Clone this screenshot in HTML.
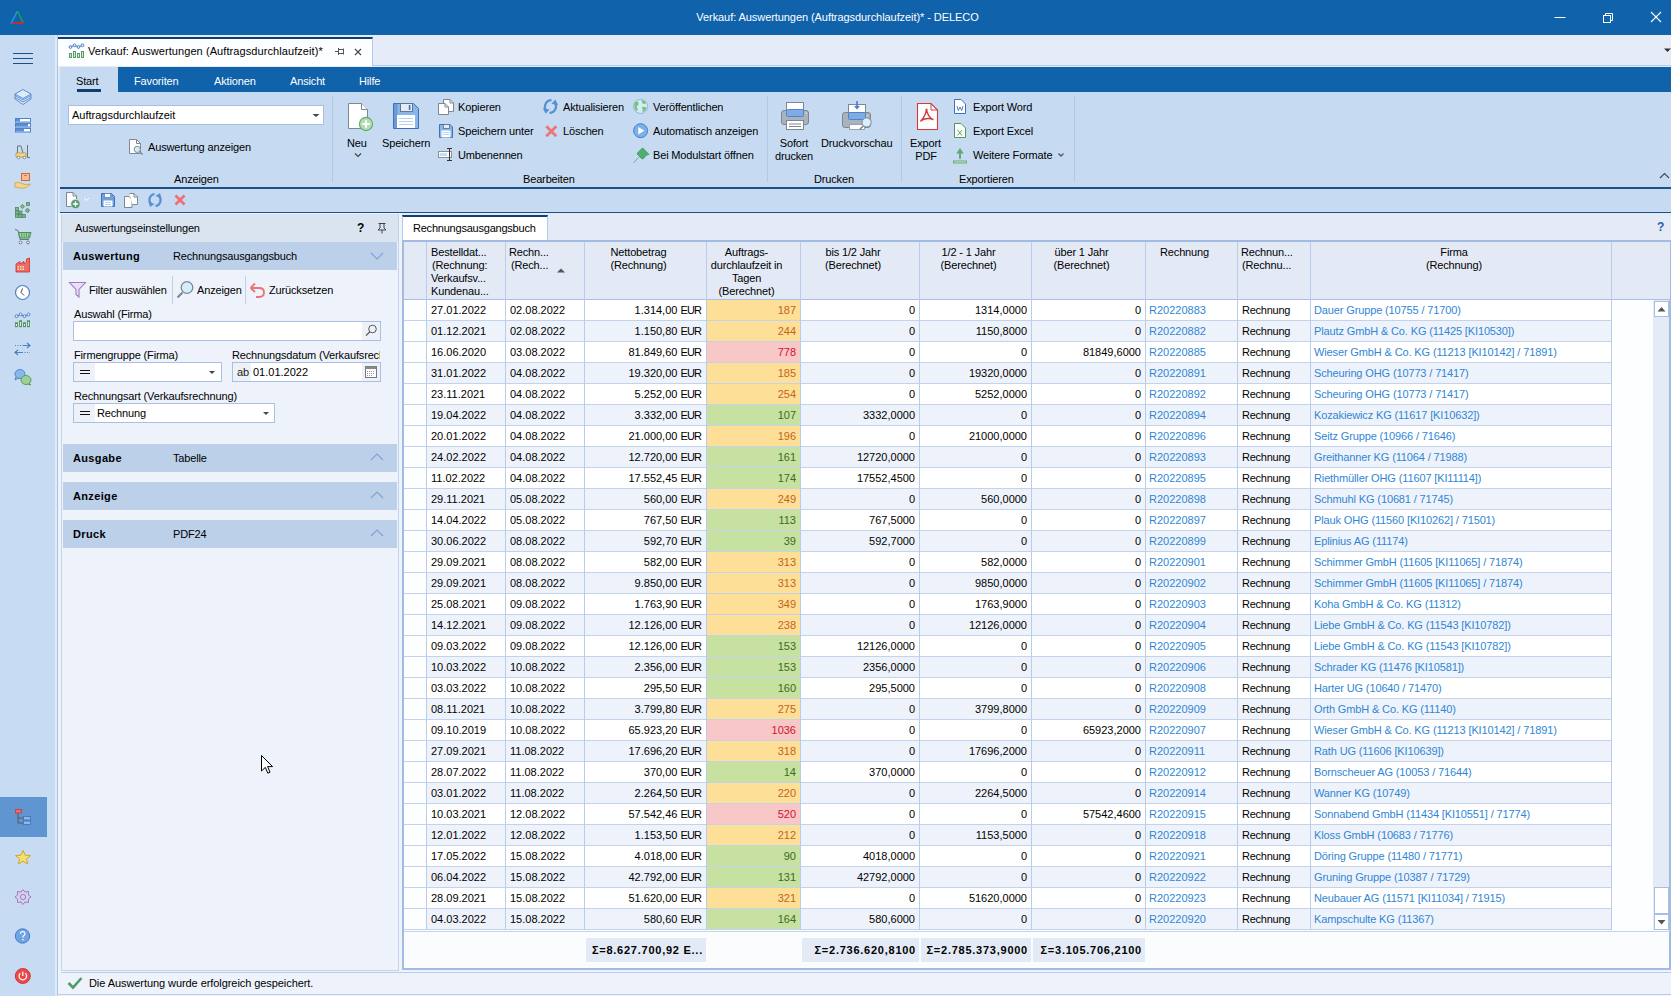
<!DOCTYPE html>
<html><head><meta charset="utf-8">
<style>
*{margin:0;padding:0;box-sizing:border-box}
html,body{width:1671px;height:996px;overflow:hidden;background:#eef3fb;font-family:"Liberation Sans",sans-serif;font-size:11px;color:#000}
.a{position:absolute}
.t{white-space:nowrap;line-height:14px;letter-spacing:-0.15px}
.n{letter-spacing:0}
.r{text-align:right}
.c{text-align:center}
.lk{color:#2f86d6}
.b{font-weight:bold}
svg{position:absolute;overflow:visible}
</style></head><body>

<!-- TITLE BAR -->
<div class="a" style="left:0;top:0;width:1671px;height:35px;background:#1062ab"></div>
<div class="a t" style="left:2px;top:10px;width:1671px;text-align:center;color:#fff;font-size:11px;letter-spacing:-0.07px">Verkauf: Auswertungen (Auftragsdurchlaufzeit)* - DELECO</div>

<!-- title icons -->
<svg style="left:0;top:0" width="40" height="35">
<line x1="11" y1="23.5" x2="17.5" y2="11" stroke="#1a9be0" stroke-width="1.6"/>
<line x1="17.5" y1="11" x2="23" y2="22.5" stroke="#22a045" stroke-width="1.6"/>
<line x1="12.5" y1="23.2" x2="24" y2="23.2" stroke="#e0202a" stroke-width="1.8"/>
</svg>
<svg style="left:1540px;top:0" width="131" height="35">
<line x1="14.5" y1="17.5" x2="25.5" y2="17.5" stroke="#fff" stroke-width="1"/>
<rect x="63.5" y="15.5" width="7" height="7" fill="none" stroke="#fff" stroke-width="1"/>
<path d="M65.5 15.5 V13.5 H72.5 V20.5 H70.5" fill="none" stroke="#fff" stroke-width="1"/>
<line x1="111" y1="12" x2="121" y2="22" stroke="#fff" stroke-width="1.1"/>
<line x1="121" y1="12" x2="111" y2="22" stroke="#fff" stroke-width="1.1"/>
</svg>

<!-- SIDEBAR -->
<div class="a" style="left:0;top:35px;width:55px;height:961px;background:#c7dbf2"></div>
<div class="a" style="left:55px;top:35px;width:5px;height:961px;background:#e0eaf7"></div>
<div class="a" style="left:57px;top:35px;width:1px;height:961px;background:#a9c3e8"></div>
<svg style="left:0;top:35px" width="55" height="961">
<!-- hamburger -->
<g stroke="#1b4f86" stroke-width="1"><line x1="13" y1="18.5" x2="33" y2="18.5"/><line x1="13" y1="23.5" x2="33" y2="23.5"/><line x1="13" y1="28.5" x2="33" y2="28.5"/></g>
<!-- layers y89-105 -->
<g transform="translate(0,54)" fill="#dcecfb" stroke="#5f8fcf" stroke-width="1">
<path d="M23 0.5 L31 5 L31 10 L23 15.5 L15 10 L15 5 Z"/>
<path d="M15 6.5 L23 11 L31 6.5 M15 8.5 L23 13 L31 8.5" fill="none"/>
<path d="M15 5 L23 9.5 L31 5" fill="none"/>
</g>
<!-- list y118-132 -->
<g transform="translate(0,83)">
<rect x="15.5" y="0.5" width="15" height="3.5" fill="#fff" stroke="#4e84cb"/>
<rect x="15.5" y="5.5" width="15" height="3.5" fill="#fff" stroke="#4e84cb"/>
<rect x="15.5" y="10.5" width="15" height="3.5" fill="#fff" stroke="#4e84cb"/>
<rect x="16" y="1" width="4" height="2.5" fill="#5b8fd4"/>
<rect x="16" y="6" width="12" height="2.5" fill="#5b8fd4"/>
<rect x="16" y="11" width="8" height="2.5" fill="#5b8fd4"/>
</g>
<!-- forklift y146-160 -->
<g transform="translate(0,110)">
<path d="M17.5 8 V1 H21 L23 8" fill="none" stroke="#6a7686" stroke-width="1"/>
<line x1="27.5" y1="0" x2="27.5" y2="12.5" stroke="#6a7686" stroke-width="1"/>
<line x1="27.5" y1="12.5" x2="30" y2="12.5" stroke="#6a7686" stroke-width="1"/>
<path d="M16 8 H26 V12 H16 Z" fill="#f6d77a" stroke="#b89a3a" stroke-width="0.8"/>
<circle cx="18.5" cy="12.5" r="1.3" fill="#fff" stroke="#6a7686" stroke-width="0.8"/>
<circle cx="24.5" cy="12.5" r="1.3" fill="#fff" stroke="#6a7686" stroke-width="0.8"/>
</g>
<!-- hand box y173-189 -->
<g transform="translate(0,138)">
<rect x="21.5" y="0.5" width="8" height="7" fill="#fbb98f" stroke="#c96a3a" stroke-width="1"/>
<line x1="24" y1="2.5" x2="27" y2="2.5" stroke="#c96a3a" stroke-width="0.8"/>
<path d="M15 10 Q18 8.5 22 10.5 L25 11.5 Q27 12 30.5 11 Q29 14 24 15 Q19 15.5 15 14 Z" fill="#f6d48a" stroke="#c8a24a" stroke-width="0.8"/>
</g>
<!-- blocks y202-217 -->
<g transform="translate(0,167)" fill="#7fb58f" stroke="#4f8a62" stroke-width="0.8">
<rect x="15.5" y="5.5" width="3" height="3"/><rect x="15.5" y="9" width="3" height="3"/><rect x="15.5" y="12.5" width="3" height="3"/>
<rect x="19" y="9" width="3" height="3"/><rect x="19" y="12.5" width="3" height="3"/><rect x="22.5" y="12.5" width="3" height="3"/>
<rect x="21" y="3" width="3" height="3" transform="rotate(45 22.5 4.5)"/><rect x="26.5" y="0.5" width="3" height="3"/><rect x="26" y="7" width="3" height="3" transform="rotate(30 27.5 8.5)"/>
</g>
<!-- cart y229-244 -->
<g transform="translate(0,194)">
<path d="M15 0.5 L18 1.5 L20 10.5 H29" fill="none" stroke="#6a7686" stroke-width="1"/>
<path d="M18.5 3.5 H31 L29.5 9 H20 Z" fill="#9fd49a" stroke="#3f8a4f" stroke-width="0.9"/>
<g stroke="#3f8a4f" stroke-width="0.7"><line x1="21.5" y1="4" x2="22" y2="8.5"/><line x1="24" y1="4" x2="24.3" y2="8.5"/><line x1="26.5" y1="4" x2="26.5" y2="8.5"/><line x1="29" y1="4" x2="28.5" y2="8.5"/></g>
<circle cx="20.5" cy="13.5" r="1.4" fill="#fff" stroke="#6a7686"/><circle cx="28" cy="13.5" r="1.4" fill="#fff" stroke="#6a7686"/>
</g>
<!-- factory y258-272 -->
<g transform="translate(0,223)">
<path d="M16 14 V6 L20 3.5 V6 L24 3.5 V6 L26.5 4 V1 L29.5 0 V14 Z" fill="#ee6b64" stroke="#c9302c" stroke-width="0.8"/>
<g fill="#fde7c0"><rect x="17.5" y="8" width="1.5" height="1.5"/><rect x="20" y="8" width="1.5" height="1.5"/><rect x="22.5" y="8" width="1.5" height="1.5"/><rect x="17.5" y="10.5" width="1.5" height="1.5"/><rect x="20" y="10.5" width="1.5" height="1.5"/><rect x="22.5" y="10.5" width="1.5" height="1.5"/></g>
</g>
<!-- clock y285-300 -->
<g transform="translate(0,250)">
<circle cx="22.5" cy="7.5" r="7" fill="#fff" stroke="#4f7fc4" stroke-width="1.2"/>
<path d="M22.5 3.5 L21 7.5 L24 10.5" fill="none" stroke="#333" stroke-width="0.9"/>
</g>
<!-- chart y314-328 -->
<g transform="translate(-54,234.2)">
<path d="M70.5 47 L74.5 45.3 L78.5 47 L82.5 45.3" fill="none" stroke="#4f7fc4" stroke-width="1"/>
<g fill="#e8f0fb" stroke="#4f7fc4" stroke-width="1"><circle cx="70.5" cy="47" r="1.4"/><circle cx="74.5" cy="45.3" r="1.4"/><circle cx="78.5" cy="47" r="1.4"/><circle cx="82.5" cy="45.3" r="1.4"/></g>
<g fill="#d6efd0" stroke="#5a9a68" stroke-width="1"><rect x="69.5" y="53.5" width="2" height="4"/><rect x="73.5" y="51.5" width="2" height="6"/><rect x="77.5" y="53.5" width="2" height="4"/><rect x="81.5" y="51.5" width="2" height="6"/></g>
</g>
<!-- arrows y343-354 -->
<g transform="translate(0,308)" stroke="#4f7fc4" fill="none">
<path d="M15 2.5 H23" stroke-dasharray="1 1.5" stroke-width="1.2"/>
<path d="M23 2.5 H30 M27 0 L30 2.5 L27 5" stroke-width="1.2"/>
<path d="M22 9.5 H30" stroke-dasharray="1 1.5" stroke-width="1.2"/>
<path d="M15 9.5 H22 M18 7 L15 9.5 L18 12" stroke-width="1.2"/>
</g>
<!-- chat y369-385 -->
<g transform="translate(0,334)">
<ellipse cx="20" cy="5" rx="5" ry="4.5" fill="#8ab8ea" stroke="#4f7fc4" stroke-width="0.9"/>
<path d="M16 8 L15 11 L18.5 9" fill="#8ab8ea" stroke="#4f7fc4" stroke-width="0.9"/>
<ellipse cx="26" cy="11" rx="5" ry="4.5" fill="#9fcf96" stroke="#4f9a58" stroke-width="0.9"/>
<path d="M29 14 L31 16 L27.5 15" fill="#9fcf96" stroke="#4f9a58" stroke-width="0.9"/>
</g>
<!-- highlight -->
<rect x="0" y="762" width="47" height="40" fill="#5f95d0"/>
<g transform="translate(0,774)">
<rect x="15.5" y="0.5" width="6" height="3.5" fill="#f0686a" stroke="#c73a3a" stroke-width="0.8"/>
<path d="M18 4 V14 H23 M18 9 H23" fill="none" stroke="#555" stroke-width="0.9"/>
<rect x="23.5" y="7.5" width="7" height="3.5" fill="#8ab8ea" stroke="#3f6fb4" stroke-width="0.8"/>
<rect x="23.5" y="12" width="7" height="3.5" fill="#8ab8ea" stroke="#3f6fb4" stroke-width="0.8"/>
</g>
<!-- star y850-864 -->
<path transform="translate(0,815)" d="M23 0.5 L25.2 5.2 L30.5 5.6 L26.4 9 L27.8 14 L23 11.2 L18.2 14 L19.6 9 L15.5 5.6 L20.8 5.2 Z" fill="#f7e06a" stroke="#c8a22a" stroke-width="0.9"/>
<!-- gear y889-905 -->
<g transform="translate(0,854)">
<path d="M23 0.5 L25 3 L28.5 2.5 L28.5 6 L31 8 L28.5 10 L28.5 13.5 L25 13 L23 15.5 L21 13 L17.5 13.5 L17.5 10 L15 8 L17.5 6 L17.5 2.5 L21 3 Z" fill="#d8cdea" stroke="#9b7fc0" stroke-width="1"/>
<circle cx="23" cy="8" r="2.6" fill="#c7dbf2" stroke="#9b7fc0" stroke-width="1"/>
</g>
<!-- help y929-944 -->
<g transform="translate(0,893)">
<circle cx="22.5" cy="8" r="7.2" fill="#6fa4e4" stroke="#3f72bf" stroke-width="0.9"/>
<path d="M20.3 5.8 Q20.5 3.5 22.7 3.5 Q25 3.6 25 5.8 Q25 7.3 23 8.3 V9.8" fill="none" stroke="#fff" stroke-width="1.1"/>
<circle cx="23" cy="11.8" r="0.8" fill="#fff"/>
</g>
<!-- power y969-985 -->
<g transform="translate(0,933)">
<circle cx="22.8" cy="8" r="7.5" fill="#eb4a4a" stroke="#c22f2f" stroke-width="0.9"/>
<path d="M20.3 5.2 A3.8 3.8 0 1 0 25.3 5.2" fill="none" stroke="#fff" stroke-width="1.2"/>
<line x1="22.8" y1="3.8" x2="22.8" y2="8" stroke="#fff" stroke-width="1.2"/>
</g>
</svg>

<!-- DOC TAB STRIP -->
<div class="a" style="left:58px;top:35px;width:1613px;height:32px;background:#e6ecf7"></div>
<div class="a" style="left:58px;top:65px;width:1613px;height:1px;background:#b4cbec"></div>
<div class="a" style="left:58px;top:37px;width:315px;height:29px;background:#fdfeff;border-top:2px solid #0f3e73;border-right:1px solid #b4cbec"></div>
<svg style="left:0;top:0" width="120" height="70">
<path d="M70.5 47 L74.5 45.3 L78.5 47 L82.5 45.3" fill="none" stroke="#4f7fc4" stroke-width="1"/>
<g fill="#e8f0fb" stroke="#4f7fc4" stroke-width="1"><circle cx="70.5" cy="47" r="1.4"/><circle cx="74.5" cy="45.3" r="1.4"/><circle cx="78.5" cy="47" r="1.4"/><circle cx="82.5" cy="45.3" r="1.4"/></g>
<g fill="#d6efd0" stroke="#5a9a68" stroke-width="1"><rect x="69.5" y="53.5" width="2" height="4"/><rect x="73.5" y="51.5" width="2" height="6"/><rect x="77.5" y="53.5" width="2" height="4"/><rect x="81.5" y="51.5" width="2" height="6"/></g>
</svg>
<div class="a t" style="left:88px;top:44px;color:#000;letter-spacing:0.08px">Verkauf: Auswertungen (Auftragsdurchlaufzeit)*</div>
<svg style="left:330px;top:40px" width="40" height="24">
<g stroke="#555" stroke-width="1" fill="none"><path d="M5 11.5 H8.5 M8.5 8 V15 M8.5 9.5 H13.5 M8.5 13.5 H13.5 M13.5 8.5 V14.5"/></g>
<path d="M25 9 L31 15 M31 9 L25 15" stroke="#444" stroke-width="1.1"/>
</svg>
<svg style="left:1658px;top:44px" width="16" height="12"><path d="M6 4.5 H13 L9.5 8 Z" fill="#333"/></svg>

<!-- RIBBON TAB BAR -->
<div class="a" style="left:118px;top:67px;width:1553px;height:25px;background:#1062ab"></div>
<div class="a" style="left:60px;top:67px;width:58px;height:25px;background:#c6dbf2"></div>
<div class="a t" style="left:76px;top:74px;color:#000">Start</div>
<div class="a" style="left:77px;top:89px;width:24px;height:3px;background:#0f3e73"></div>
<div class="a t" style="left:134px;top:74px;color:#fff">Favoriten</div>
<div class="a t" style="left:214px;top:74px;color:#fff">Aktionen</div>
<div class="a t" style="left:290px;top:74px;color:#fff">Ansicht</div>
<div class="a t" style="left:359px;top:74px;color:#fff">Hilfe</div>

<!-- RIBBON BODY -->
<div class="a" style="left:60px;top:92px;width:1611px;height:95px;background:#c6dbf2"></div>
<div class="a" style="left:60px;top:187px;width:1611px;height:2px;background:#1b4f86"></div>
<!-- group separators -->
<div class="a" style="left:332px;top:96px;width:1px;height:86px;background:#b3c8e2"></div>
<div class="a" style="left:767px;top:96px;width:1px;height:86px;background:#b3c8e2"></div>
<div class="a" style="left:901px;top:96px;width:1px;height:86px;background:#b3c8e2"></div>
<div class="a" style="left:1074px;top:96px;width:1px;height:86px;background:#b3c8e2"></div>
<!-- Anzeigen group -->
<div class="a" style="left:68px;top:105px;width:256px;height:20px;background:#fff;border:1px solid #a7bedf"></div>
<div class="a t n" style="left:72px;top:108px;color:#000">Auftragsdurchlaufzeit</div>
<svg style="left:300px;top:105px" width="24" height="20"><path d="M12.5 9 H19.5 L16 12 Z" fill="#444"/></svg>
<svg style="left:125px;top:136px" width="24" height="20">
<path d="M4.5 3.5 H11.5 L15.5 7.5 V17.5 H4.5 Z" fill="#fff" stroke="#7d8a96" stroke-width="1"/>
<path d="M11.5 3.5 V7.5 H15.5" fill="none" stroke="#7d8a96"/>
<circle cx="12.3" cy="13.4" r="3.1" fill="#d3ecfb" stroke="#7d8a96" stroke-width="1"/>
<line x1="14.6" y1="15.7" x2="17.6" y2="18.6" stroke="#7d8a96" stroke-width="1.4"/>
</svg>
<div class="a t" style="left:148px;top:140px;color:#000">Auswertung anzeigen</div>
<div class="a t" style="left:174px;top:172px;color:#000">Anzeigen</div>

<!-- Bearbeiten group -->
<svg style="left:340px;top:98px" width="100" height="64">
<!-- Neu -->
<path d="M8.5 5.5 H21.5 L27.5 11.5 V30.5 H8.5 Z" fill="#fff" stroke="#7d8792" stroke-width="1"/>
<path d="M21.5 5.5 V11.5 H27.5" fill="#fff" stroke="#7d8792"/>
<circle cx="26" cy="26" r="6.6" fill="#b5dbb0" stroke="#5fae6a" stroke-width="1.1"/>
<path d="M26 22.3 V29.7 M22.3 26 H29.7" stroke="#fff" stroke-width="1.8"/>
<path d="M15 55.5 L18 58.5 L21 55.5" fill="none" stroke="#444" stroke-width="1.2"/>
<!-- Speichern -->
<path d="M53.5 5.5 H73.5 L78.5 10.5 V30.5 H53.5 Z" fill="#8ab4ec" stroke="#4470b0" stroke-width="1"/>
<rect x="54" y="6" width="3.5" height="24" fill="#6b9ad8"/>
<rect x="60.5" y="5.5" width="12" height="8" fill="#e4ecf5" stroke="#55708e" stroke-width="0.9"/>
<rect x="68.8" y="7" width="1.6" height="5" fill="#3f6fb4"/>
<rect x="57" y="17" width="18" height="13" fill="#fff"/>
<g stroke="#a9cdf3" stroke-width="0.9"><line x1="59" y1="20.5" x2="73" y2="20.5"/><line x1="59" y1="23.5" x2="73" y2="23.5"/><line x1="59" y1="26.5" x2="73" y2="26.5"/></g>
</svg>
<div class="a t" style="left:347px;top:136px;color:#000">Neu</div>
<div class="a t" style="left:382px;top:136px;color:#000">Speichern</div>
<svg style="left:430px;top:96px" width="340" height="70">
<!-- Kopieren -->
<path d="M13.5 3.5 H20 L23.5 7 V15.5 H13.5 Z" fill="#fff" stroke="#7d8792"/>
<path d="M20 3.5 V7 H23.5" fill="none" stroke="#7d8792"/>
<path d="M8.5 7.5 H15 L18.5 11 V18.5 H8.5 Z" fill="#fff" stroke="#7d8792"/>
<path d="M15 7.5 V11 H18.5" fill="none" stroke="#7d8792"/>
<!-- Speichern unter -->
<path d="M9.5 28.5 H20 L22.5 31 V41.5 H9.5 Z" fill="#8ab4ec" stroke="#4470b0"/>
<rect x="13.5" y="28.5" width="6" height="4" fill="#e4ecf5" stroke="#55708e" stroke-width="0.8"/>
<rect x="11.5" y="34.5" width="9" height="7" fill="#fff"/>
<path d="M12.5 36.5 H19.5 M12.5 38.5 H19.5" stroke="#a9cdf3" stroke-width="0.8"/>
<!-- Umbenennen -->
<rect x="8.5" y="55.5" width="13" height="6" fill="#fff" stroke="#8a929c"/>
<rect x="10" y="57" width="7" height="3" fill="#bfe0f7"/>
<line x1="19.5" y1="53" x2="19.5" y2="64.5" stroke="#333" stroke-width="1"/>
<path d="M17 52.5 H22 M17 64.5 H22" stroke="#333" stroke-width="1"/>
<!-- Aktualisieren -->
<path d="M121.5 4.2 A6.6 6.6 0 0 0 116 14.5" fill="none" stroke="#5b8fd4" stroke-width="2.2"/>
<path d="M119.5 17 A6.6 6.6 0 0 0 125 6.8" fill="none" stroke="#5b8fd4" stroke-width="2.2"/>
<path d="M112.8 12.2 L115.6 17.8 L119.6 13.6 Z M128.2 9.2 L125.4 3.6 L121.4 7.8 Z" fill="#5b8fd4"/>
<!-- Loeschen -->
<path d="M116.3 30.2 L126.3 40.2 M126.3 30.2 L116.3 40.2" stroke="#ec7676" stroke-width="2.8"/>
<!-- Veroeffentlichen -->
<circle cx="210.6" cy="10.5" r="7" fill="#d2ecf7" stroke="#8fb6d8" stroke-width="1"/>
<path d="M205 6 Q207 5 208.5 6.5 Q209 9 207 10 Q206.5 12.5 208 14 L206 15 Q204 12 204.2 9 Z" fill="#7fc07f"/>
<path d="M211.5 4 Q214.5 4 216.5 6.5 Q215 8.5 213 8 Q211.5 6.5 211.5 4 Z M212 11 Q215 10 216.8 12 Q215.5 15.5 212.5 16.5 Q213 13.5 212 11 Z" fill="#7fc07f"/>
<!-- Automatisch anzeigen -->
<circle cx="210.6" cy="34.7" r="7" fill="#7ab1ea" stroke="#4a7fc8" stroke-width="1"/>
<path d="M208.3 31 L214.3 34.7 L208.3 38.4 Z" fill="#fff"/>
<!-- Bei Modulstart -->
<path d="M212.5 51.8 L219 58.3 L216.5 59.3 L213 63 L211.5 62.5 L207.5 58.5 L207.2 57 L211 53.5 Z" fill="#4fae6e" stroke="#3a8a58" stroke-width="0.6"/>
<line x1="209" y1="61" x2="203.5" y2="66.8" stroke="#7a9a88" stroke-width="0.9"/>
</svg>
<div class="a t" style="left:458px;top:100px;color:#000">Kopieren</div>
<div class="a t" style="left:458px;top:124px;color:#000">Speichern unter</div>
<div class="a t" style="left:458px;top:148px;color:#000">Umbenennen</div>
<div class="a t" style="left:563px;top:100px;color:#000">Aktualisieren</div>
<div class="a t" style="left:563px;top:124px;color:#000">Löschen</div>
<div class="a t" style="left:653px;top:100px;color:#000">Veröffentlichen</div>
<div class="a t" style="left:653px;top:124px;color:#000">Automatisch anzeigen</div>
<div class="a t" style="left:653px;top:148px;color:#000">Bei Modulstart öffnen</div>
<div class="a t" style="left:523px;top:172px;color:#000">Bearbeiten</div>

<!-- Drucken group -->
<svg style="left:770px;top:96px" width="140" height="40">
<!-- Sofort drucken printer -->
<rect x="16.5" y="6.5" width="17" height="9" fill="#fff" stroke="#7d8792"/>
<rect x="11.5" y="14.5" width="27" height="14" rx="2.5" fill="#a9b3be" stroke="#7d8792"/>
<rect x="16.5" y="13.5" width="17" height="7" rx="1" fill="#7fabe6" stroke="#4a7fc8" stroke-width="0.9"/>
<rect x="35.5" y="16.5" width="1.5" height="1.5" fill="#f3e27a"/>
<rect x="16.5" y="24.5" width="17" height="9" fill="#fff" stroke="#7d8792"/>
<line x1="19" y1="28" x2="31" y2="28" stroke="#7d8792"/><line x1="19" y1="30.5" x2="31" y2="30.5" stroke="#7d8792"/>
<!-- Druckvorschau -->
<rect x="78.5" y="8.5" width="17" height="9" fill="#fff" stroke="#7d8792"/>
<path d="M87 5 V11" stroke="#4a7fc8" stroke-width="1.6"/>
<path d="M84 10 L87 13.5 L90 10 Z" fill="#4a7fc8"/>
<rect x="72.5" y="16.5" width="28" height="15" rx="2.5" fill="#a9b3be" stroke="#7d8792"/>
<rect x="78.5" y="16.5" width="17" height="7" rx="1" fill="#7fabe6" stroke="#4a7fc8" stroke-width="0.9"/>
<rect x="96.5" y="19" width="1.5" height="1.5" fill="#f3e27a"/>
<rect x="79.5" y="28.5" width="15" height="5" fill="#fff" stroke="#9aa3ad"/>
<circle cx="96.6" cy="26.4" r="4.6" fill="#d9efff" stroke="#7d8792" stroke-width="1"/>
<line x1="93.3" y1="29.7" x2="90" y2="33.3" stroke="#7d8792" stroke-width="1.6"/>
</svg>
<div class="a t c" style="left:764px;width:60px;top:136px;color:#000">Sofort</div>
<div class="a t c" style="left:764px;width:60px;top:149px;color:#000">drucken</div>
<div class="a t" style="left:821px;top:136px;color:#000">Druckvorschau</div>
<div class="a t" style="left:814px;top:172px;color:#000">Drucken</div>

<!-- Exportieren group -->
<svg style="left:905px;top:96px" width="170" height="70">
<!-- PDF -->
<path d="M12.5 7.5 H26 L32.5 14 V33.5 H12.5 Z" fill="#fff" stroke="#d43a3a" stroke-width="1.1"/>
<path d="M26 7.5 V14 H32.5" fill="none" stroke="#d43a3a"/>
<path d="M21.5 13.5 Q20.5 20 15.5 25.5 M21.5 13.5 Q22.5 20 28 24 M16.5 24.5 Q21.5 21 28.5 23.5" fill="none" stroke="#d43a3a" stroke-width="1.5"/><circle cx="21.5" cy="13.5" r="1" fill="#d43a3a"/>
<!-- Word y99-114 -->
<path d="M49.5 3.5 H56 L60.5 8 V17.5 H49.5 Z" fill="#fff" stroke="#3f6fb4"/>
<path d="M52 10 L53.3 14.5 L55 11 L56.7 14.5 L58 10" fill="none" stroke="#3f6fb4" stroke-width="0.9"/>
<!-- Excel -->
<path d="M49.5 27.5 H56 L60.5 32 V41.5 H49.5 Z" fill="#fff" stroke="#4f9a58"/>
<path d="M52.5 34 L57 39.5 M57 34 L52.5 39.5" stroke="#4f9a58" stroke-width="0.9"/>
<!-- Weitere Formate -->
<path d="M55 55 V63" fill="none" stroke="#5fa870" stroke-width="1.8"/><path d="M51.3 57.5 L55 52 L58.7 57.5 Z" fill="#5fa870"/>
<rect x="48.5" y="65" width="13" height="2" fill="#c6e6c0" stroke="#5fa870" stroke-width="0.9"/>
<path d="M153.5 57.5 L156 60 L158.5 57.5" fill="none" stroke="#555" stroke-width="1.3"/>
</svg>
<div class="a t" style="left:910px;top:136px;color:#000">Export</div>
<div class="a t c" style="left:906px;width:40px;top:149px;color:#000">PDF</div>
<div class="a t" style="left:973px;top:100px;color:#000">Export Word</div>
<div class="a t" style="left:973px;top:124px;color:#000">Export Excel</div>
<div class="a t" style="left:973px;top:148px;color:#000">Weitere Formate</div>
<div class="a t" style="left:959px;top:172px;color:#000">Exportieren</div>
<svg style="left:1650px;top:168px" width="21" height="16"><path d="M10 10 L14.5 5.5 L19 10" fill="none" stroke="#444" stroke-width="1.1"/></svg>

<!-- QUICK TOOLBAR -->
<div class="a" style="left:60px;top:189px;width:1611px;height:23px;background:#c6dbf2"></div>
<div class="a" style="left:60px;top:212px;width:1611px;height:1px;background:#1b4f86"></div>
<svg style="left:57px;top:189px" width="140" height="23">
<path d="M9.5 3.5 H16 L19.5 7 V17.5 H9.5 Z" fill="#fff" stroke="#7d8792"/>
<path d="M16 3.5 V7 H19.5" fill="none" stroke="#7d8792"/>
<circle cx="18.5" cy="15" r="4.6" fill="#4f9a68" stroke="#c6dbf2" stroke-width="0.8"/>
<path d="M18.5 12.3 V17.7 M15.8 15 H21.2" stroke="#fff" stroke-width="1.3"/>
<path d="M27 9 L29.5 11.5 L32 9" fill="none" stroke="#fff" stroke-width="1"/>
<path d="M44.5 4.5 H54.5 L57.5 7.5 V17.5 H44.5 Z" fill="#6ea0e0" stroke="#4470b0"/>
<rect x="47.5" y="4.5" width="6" height="4" fill="#fff" stroke="#4470b0" stroke-width="0.6"/>
<rect x="46.5" y="11.5" width="9" height="6" fill="#fff"/>
<path d="M48 13.5 H54 M48 15.5 H54" stroke="#9ec3ef" stroke-width="0.8"/>
<path d="M67.5 7.5 H72 L75 10.5 V18.5 H67.5 Z" fill="#fff" stroke="#7d8792"/>
<path d="M72.5 4.5 H77 L80.5 8 V15.5 H75.5" fill="#fff" stroke="#7d8792"/>
<path d="M77 4.5 V8 H80.5" fill="none" stroke="#7d8792"/>
<path d="M97.5 5 A6 6 0 0 0 94 15" fill="none" stroke="#5b8fd4" stroke-width="2.2"/>
<path d="M98.5 17 A6 6 0 0 0 102 7" fill="none" stroke="#5b8fd4" stroke-width="2.2"/>
<path d="M91.5 12.5 L93 18 L97.5 15 Z M104.5 9.5 L103 4 L98.5 7 Z" fill="#5b8fd4"/>
<path d="M118.5 6.5 L127.5 15.5 M127.5 6.5 L118.5 15.5" stroke="#ec7070" stroke-width="2.6"/>
</svg>

<!-- SETTINGS PANEL -->
<div class="a" style="left:61px;top:214px;width:338px;height:757px;background:#eef3fb;border:1px solid #c2d3ea"></div>
<div class="a" style="left:62px;top:214px;width:336px;height:28px;background:#dae4f1"></div>
<div class="a t" style="left:75px;top:221px;color:#000">Auswertungseinstellungen</div>
<div class="a t b" style="left:357px;top:221px;color:#000;font-size:12px">?</div>
<svg style="left:372px;top:218px" width="20" height="20"><path d="M6.5 5.5 H13.5 M8 5.5 V10 L6 12 H14 L12 10 V5.5 M10 12 V15.5" fill="none" stroke="#444" stroke-width="1"/></svg>

<div class="a" style="left:63px;top:242px;width:334px;height:28px;background:#bcd0ea"></div>
<div class="a t b" style="left:73px;top:249px;color:#000;letter-spacing:0.35px">Auswertung</div>
<div class="a t" style="left:173px;top:249px;color:#000">Rechnungsausgangsbuch</div>
<svg style="left:365px;top:246px" width="24" height="20"><path d="M6 7 L12 13 L18 7" fill="none" stroke="#7fa2d8" stroke-width="1.2"/></svg>

<svg style="left:62px;top:272px" width="280" height="40">
<path d="M7.5 10.5 H23.5 L17 17.5 V25 L14 22.5 V17.5 Z" fill="#eadff5" stroke="#9b7fc0" stroke-width="1.1"/>
<line x1="110.5" y1="4" x2="110.5" y2="32" stroke="#c3d1e4" stroke-width="1"/>
<circle cx="125" cy="15.5" r="5.8" fill="#d6ecfb" stroke="#7c8896" stroke-width="1.3"/>
<line x1="120.5" y1="20.5" x2="115.5" y2="25.5" stroke="#7c8896" stroke-width="2.2"/>
<line x1="183.5" y1="4" x2="183.5" y2="32" stroke="#c3d1e4" stroke-width="1"/>
<path d="M189.5 16 H197 Q202 16 202 20.5 Q202 25 197 25 H194" fill="none" stroke="#e87474" stroke-width="1.8"/>
<path d="M188.5 16 L193 11.5 M188.5 16 L193 20" fill="none" stroke="#e87474" stroke-width="1.8"/>
</svg>
<div class="a t" style="left:89px;top:283px;color:#000">Filter auswählen</div>
<div class="a t" style="left:197px;top:283px;color:#000">Anzeigen</div>
<div class="a t" style="left:269px;top:283px;color:#000">Zurücksetzen</div>

<div class="a t" style="left:74px;top:307px;color:#000">Auswahl (Firma)</div>
<div class="a" style="left:73px;top:321px;width:308px;height:20px;background:#fff;border:1px solid #a9c0e2"></div>
<div class="a" style="left:362px;top:322px;width:18px;height:18px;background:#eef2f8"></div>
<svg style="left:362px;top:322px" width="18" height="18"><circle cx="10.5" cy="7" r="3.8" fill="none" stroke="#555" stroke-width="1"/><line x1="7.8" y1="9.8" x2="4" y2="13.6" stroke="#555" stroke-width="1.3"/></svg>

<div class="a t" style="left:74px;top:348px;color:#000">Firmengruppe (Firma)</div>
<div class="a" style="left:73px;top:362px;width:149px;height:20px;background:#fff;border:1px solid #a9c0e2"></div>
<div class="a" style="left:74px;top:363px;width:21px;height:18px;background:#eef2f8"></div>
<svg style="left:74px;top:363px" width="148" height="18"><path d="M6 7.5 H16 M6 10.5 H16" stroke="#111" stroke-width="1.2"/><path d="M135 8 H141 L138 11 Z" fill="#444"/></svg>

<div class="a" style="left:232px;top:348px;width:148px;height:16px;overflow:hidden"><div class="t" style="color:#000">Rechnungsdatum (Verkaufsrechnung)</div></div>
<div class="a" style="left:232px;top:362px;width:149px;height:20px;background:#fff;border:1px solid #a9c0e2"></div>
<div class="a" style="left:233px;top:363px;width:18px;height:18px;background:#eef2f8"></div>
<div class="a" style="left:362px;top:363px;width:18px;height:18px;background:#eef2f8"></div>
<div class="a t" style="left:237px;top:365px;color:#222">ab</div>
<div class="a t n" style="left:253px;top:365px;color:#000">01.01.2022</div>
<svg style="left:362px;top:363px" width="18" height="18"><rect x="3.5" y="3.5" width="11" height="11" fill="#fff" stroke="#777"/><rect x="3.5" y="3.5" width="11" height="2.5" fill="#888"/><g fill="#999"><rect x="5" y="8" width="1" height="1"/><rect x="7" y="8" width="1" height="1"/><rect x="9" y="8" width="1" height="1"/><rect x="11" y="8" width="1" height="1"/><rect x="5" y="10" width="1" height="1"/><rect x="7" y="10" width="1" height="1"/><rect x="9" y="10" width="1" height="1"/><rect x="11" y="10" width="1" height="1"/><rect x="5" y="12" width="1" height="1"/><rect x="7" y="12" width="1" height="1"/><rect x="9" y="12" width="1" height="1"/></g></svg>

<div class="a t" style="left:74px;top:389px;color:#000">Rechnungsart (Verkaufsrechnung)</div>
<div class="a" style="left:73px;top:403px;width:202px;height:20px;background:#fff;border:1px solid #a9c0e2"></div>
<div class="a" style="left:74px;top:404px;width:21px;height:18px;background:#eef2f8"></div>
<svg style="left:74px;top:404px" width="200" height="18"><path d="M6 7.5 H16 M6 10.5 H16" stroke="#111" stroke-width="1.2"/><path d="M189 8 H195 L192 11 Z" fill="#444"/></svg>
<div class="a t" style="left:97px;top:406px;color:#000">Rechnung</div>

<div class="a" style="left:63px;top:444px;width:334px;height:28px;background:#bcd0ea"></div>
<div class="a t b" style="left:73px;top:451px;color:#000;letter-spacing:0.35px">Ausgabe</div>
<div class="a t" style="left:173px;top:451px;color:#000">Tabelle</div>
<div class="a" style="left:63px;top:482px;width:334px;height:28px;background:#bcd0ea"></div>
<div class="a t b" style="left:73px;top:489px;color:#000;letter-spacing:0.35px">Anzeige</div>
<div class="a" style="left:63px;top:520px;width:334px;height:28px;background:#bcd0ea"></div>
<div class="a t b" style="left:73px;top:527px;color:#000;letter-spacing:0.35px">Druck</div>
<div class="a t" style="left:173px;top:527px;color:#000">PDF24</div>
<svg style="left:365px;top:444px" width="24" height="110" fill="none" stroke="#7fa2d8" stroke-width="1.2">
<path d="M6 16 L12 10 L18 16"/><path d="M6 54 L12 48 L18 54"/><path d="M6 92 L12 86 L18 92"/>
</svg>

<!-- cursor -->
<svg style="left:261px;top:755px" width="14" height="20"><path d="M0.5 0.5 V16 L4.3 12.4 L6.8 18.2 L9 17.2 L6.6 11.6 H11.6 Z" fill="#fff" stroke="#000" stroke-width="1"/></svg>

<!-- GRID AREA -->
<div class="a" style="left:399px;top:213px;width:1272px;height:758px;background:#eef3fb"></div>
<div class="a" style="left:402px;top:213px;width:1269px;height:28px;background:#e4ebf6"></div>
<div class="a" style="left:402px;top:215px;width:146px;height:26px;background:#fff;border-top:2px solid #0f3e73;border-right:1px solid #b4cbec;border-left:1px solid #b4cbec"></div>
<div class="a t" style="left:413px;top:221px;color:#000;letter-spacing:-0.22px">Rechnungsausgangsbuch</div>
<div class="a t b" style="left:1657px;top:220px;color:#1d5fae;font-size:12px">?</div>
<div class="a" style="left:402px;top:240px;width:1269px;height:730px;background:#fbfcfe;border:2px solid #a2bbe2"></div>
<div class="a" style="left:404px;top:242px;width:1266px;height:57px;background:#e3eaf6"></div>
<div class="a" style="left:404px;top:299px;width:1266px;height:1px;background:#a9c0e4"></div>
<div class="a t" style="left:431px;top:246px;line-height:13px;color:#000">Bestelldat...</div>
<div class="a t" style="left:432px;top:259px;line-height:13px;color:#000">(Rechnung:</div>
<div class="a t" style="left:431px;top:272px;line-height:13px;color:#000">Verkaufsv...</div>
<div class="a t" style="left:431px;top:285px;line-height:13px;color:#000">Kundenau...</div>
<div class="a t" style="left:509px;top:246px;line-height:13px;color:#000">Rechn...</div>
<div class="a t" style="left:511px;top:259px;line-height:13px;color:#000">(Rech...</div>
<div class="a t c" style="left:584px;width:109px;top:246px;line-height:13px;color:#000">Nettobetrag</div>
<div class="a t c" style="left:584px;width:109px;top:259px;line-height:13px;color:#000">(Rechnung)</div>
<div class="a t c" style="left:706px;width:81px;top:246px;line-height:13px;color:#000">Auftrags-</div>
<div class="a t c" style="left:706px;width:81px;top:259px;line-height:13px;color:#000">durchlaufzeit in</div>
<div class="a t c" style="left:706px;width:81px;top:272px;line-height:13px;color:#000">Tagen</div>
<div class="a t c" style="left:706px;width:81px;top:285px;line-height:13px;color:#000">(Berechnet)</div>
<div class="a t c" style="left:800px;width:106px;top:246px;line-height:13px;color:#000">bis 1/2 Jahr</div>
<div class="a t c" style="left:800px;width:106px;top:259px;line-height:13px;color:#000">(Berechnet)</div>
<div class="a t c" style="left:919px;width:99px;top:246px;line-height:13px;color:#000">1/2 - 1 Jahr</div>
<div class="a t c" style="left:919px;width:99px;top:259px;line-height:13px;color:#000">(Berechnet)</div>
<div class="a t c" style="left:1031px;width:101px;top:246px;line-height:13px;color:#000">über 1 Jahr</div>
<div class="a t c" style="left:1031px;width:101px;top:259px;line-height:13px;color:#000">(Berechnet)</div>
<div class="a t c" style="left:1145px;width:79px;top:246px;line-height:13px;color:#000">Rechnung</div>
<div class="a t" style="left:1241px;top:246px;line-height:13px;color:#000">Rechnun...</div>
<div class="a t" style="left:1242px;top:259px;line-height:13px;color:#000">(Rechnu...</div>
<div class="a t c" style="left:1310px;width:288px;top:246px;line-height:13px;color:#000">Firma</div>
<div class="a t c" style="left:1310px;width:288px;top:259px;line-height:13px;color:#000">(Rechnung)</div>
<svg style="left:555px;top:266px" width="12" height="8"><path d="M2 6.5 L6 2.5 L10 6.5 Z" fill="#555"/></svg>
<div class="a" style="left:404px;top:300px;width:1249px;height:630px;background:#fdfeff"></div>
<div class="a" style="left:427px;top:300px;width:1184px;height:20px;background:#ffffff"></div>
<div class="a" style="left:707px;top:300px;width:93px;height:20px;background:#fddf98"></div>
<div class="a t n" style="left:431px;top:303px">27.01.2022</div>
<div class="a t n" style="left:510px;top:303px">02.08.2022</div>
<div class="a t r n" style="left:584px;width:117px;top:303px">1.314,00 <span style='letter-spacing:-0.9px'>EUR</span></div>
<div class="a t r n" style="left:706px;width:90px;top:303px;color:#c46418">187</div>
<div class="a t r n" style="left:800px;width:115px;top:303px">0</div>
<div class="a t r n" style="left:919px;width:108px;top:303px">1314,0000</div>
<div class="a t r n" style="left:1031px;width:110px;top:303px">0</div>
<div class="a t lk n" style="left:1149px;top:303px">R20220883</div>
<div class="a t" style="left:1242px;top:303px;letter-spacing:-0.25px">Rechnung</div>
<div class="a t lk" style="left:1314px;top:303px;letter-spacing:-0.13px">Dauer Gruppe (10755 / 71700)</div>
<div class="a" style="left:404px;top:320px;width:1207px;height:1px;background:#c3d3ec"></div>
<div class="a" style="left:427px;top:321px;width:1184px;height:20px;background:#eef3fb"></div>
<div class="a" style="left:707px;top:321px;width:93px;height:20px;background:#fddf98"></div>
<div class="a t n" style="left:431px;top:324px">01.12.2021</div>
<div class="a t n" style="left:510px;top:324px">02.08.2022</div>
<div class="a t r n" style="left:584px;width:117px;top:324px">1.150,80 <span style='letter-spacing:-0.9px'>EUR</span></div>
<div class="a t r n" style="left:706px;width:90px;top:324px;color:#c46418">244</div>
<div class="a t r n" style="left:800px;width:115px;top:324px">0</div>
<div class="a t r n" style="left:919px;width:108px;top:324px">1150,8000</div>
<div class="a t r n" style="left:1031px;width:110px;top:324px">0</div>
<div class="a t lk n" style="left:1149px;top:324px">R20220882</div>
<div class="a t" style="left:1242px;top:324px;letter-spacing:-0.25px">Rechnung</div>
<div class="a t lk" style="left:1314px;top:324px;letter-spacing:-0.13px">Plautz GmbH &amp; Co. KG (11425 [KI10530])</div>
<div class="a" style="left:404px;top:341px;width:1207px;height:1px;background:#c3d3ec"></div>
<div class="a" style="left:427px;top:342px;width:1184px;height:20px;background:#ffffff"></div>
<div class="a" style="left:707px;top:342px;width:93px;height:20px;background:#f8c7c8"></div>
<div class="a t n" style="left:431px;top:345px">16.06.2020</div>
<div class="a t n" style="left:510px;top:345px">03.08.2022</div>
<div class="a t r n" style="left:584px;width:117px;top:345px">81.849,60 <span style='letter-spacing:-0.9px'>EUR</span></div>
<div class="a t r n" style="left:706px;width:90px;top:345px;color:#d2122e">778</div>
<div class="a t r n" style="left:800px;width:115px;top:345px">0</div>
<div class="a t r n" style="left:919px;width:108px;top:345px">0</div>
<div class="a t r n" style="left:1031px;width:110px;top:345px">81849,6000</div>
<div class="a t lk n" style="left:1149px;top:345px">R20220885</div>
<div class="a t" style="left:1242px;top:345px;letter-spacing:-0.25px">Rechnung</div>
<div class="a t lk" style="left:1314px;top:345px;letter-spacing:-0.13px">Wieser GmbH &amp; Co. KG (11213 [KI10142] / 71891)</div>
<div class="a" style="left:404px;top:362px;width:1207px;height:1px;background:#c3d3ec"></div>
<div class="a" style="left:427px;top:363px;width:1184px;height:20px;background:#eef3fb"></div>
<div class="a" style="left:707px;top:363px;width:93px;height:20px;background:#fddf98"></div>
<div class="a t n" style="left:431px;top:366px">31.01.2022</div>
<div class="a t n" style="left:510px;top:366px">04.08.2022</div>
<div class="a t r n" style="left:584px;width:117px;top:366px">19.320,00 <span style='letter-spacing:-0.9px'>EUR</span></div>
<div class="a t r n" style="left:706px;width:90px;top:366px;color:#c46418">185</div>
<div class="a t r n" style="left:800px;width:115px;top:366px">0</div>
<div class="a t r n" style="left:919px;width:108px;top:366px">19320,0000</div>
<div class="a t r n" style="left:1031px;width:110px;top:366px">0</div>
<div class="a t lk n" style="left:1149px;top:366px">R20220891</div>
<div class="a t" style="left:1242px;top:366px;letter-spacing:-0.25px">Rechnung</div>
<div class="a t lk" style="left:1314px;top:366px;letter-spacing:-0.13px">Scheuring OHG (10773 / 71417)</div>
<div class="a" style="left:404px;top:383px;width:1207px;height:1px;background:#c3d3ec"></div>
<div class="a" style="left:427px;top:384px;width:1184px;height:20px;background:#ffffff"></div>
<div class="a" style="left:707px;top:384px;width:93px;height:20px;background:#fddf98"></div>
<div class="a t n" style="left:431px;top:387px">23.11.2021</div>
<div class="a t n" style="left:510px;top:387px">04.08.2022</div>
<div class="a t r n" style="left:584px;width:117px;top:387px">5.252,00 <span style='letter-spacing:-0.9px'>EUR</span></div>
<div class="a t r n" style="left:706px;width:90px;top:387px;color:#c46418">254</div>
<div class="a t r n" style="left:800px;width:115px;top:387px">0</div>
<div class="a t r n" style="left:919px;width:108px;top:387px">5252,0000</div>
<div class="a t r n" style="left:1031px;width:110px;top:387px">0</div>
<div class="a t lk n" style="left:1149px;top:387px">R20220892</div>
<div class="a t" style="left:1242px;top:387px;letter-spacing:-0.25px">Rechnung</div>
<div class="a t lk" style="left:1314px;top:387px;letter-spacing:-0.13px">Scheuring OHG (10773 / 71417)</div>
<div class="a" style="left:404px;top:404px;width:1207px;height:1px;background:#c3d3ec"></div>
<div class="a" style="left:427px;top:405px;width:1184px;height:20px;background:#eef3fb"></div>
<div class="a" style="left:707px;top:405px;width:93px;height:20px;background:#c6e1a0"></div>
<div class="a t n" style="left:431px;top:408px">19.04.2022</div>
<div class="a t n" style="left:510px;top:408px">04.08.2022</div>
<div class="a t r n" style="left:584px;width:117px;top:408px">3.332,00 <span style='letter-spacing:-0.9px'>EUR</span></div>
<div class="a t r n" style="left:706px;width:90px;top:408px;color:#3c6b22">107</div>
<div class="a t r n" style="left:800px;width:115px;top:408px">3332,0000</div>
<div class="a t r n" style="left:919px;width:108px;top:408px">0</div>
<div class="a t r n" style="left:1031px;width:110px;top:408px">0</div>
<div class="a t lk n" style="left:1149px;top:408px">R20220894</div>
<div class="a t" style="left:1242px;top:408px;letter-spacing:-0.25px">Rechnung</div>
<div class="a t lk" style="left:1314px;top:408px;letter-spacing:-0.13px">Kozakiewicz KG (11617 [KI10632])</div>
<div class="a" style="left:404px;top:425px;width:1207px;height:1px;background:#c3d3ec"></div>
<div class="a" style="left:427px;top:426px;width:1184px;height:20px;background:#ffffff"></div>
<div class="a" style="left:707px;top:426px;width:93px;height:20px;background:#fddf98"></div>
<div class="a t n" style="left:431px;top:429px">20.01.2022</div>
<div class="a t n" style="left:510px;top:429px">04.08.2022</div>
<div class="a t r n" style="left:584px;width:117px;top:429px">21.000,00 <span style='letter-spacing:-0.9px'>EUR</span></div>
<div class="a t r n" style="left:706px;width:90px;top:429px;color:#c46418">196</div>
<div class="a t r n" style="left:800px;width:115px;top:429px">0</div>
<div class="a t r n" style="left:919px;width:108px;top:429px">21000,0000</div>
<div class="a t r n" style="left:1031px;width:110px;top:429px">0</div>
<div class="a t lk n" style="left:1149px;top:429px">R20220896</div>
<div class="a t" style="left:1242px;top:429px;letter-spacing:-0.25px">Rechnung</div>
<div class="a t lk" style="left:1314px;top:429px;letter-spacing:-0.13px">Seitz Gruppe (10966 / 71646)</div>
<div class="a" style="left:404px;top:446px;width:1207px;height:1px;background:#c3d3ec"></div>
<div class="a" style="left:427px;top:447px;width:1184px;height:20px;background:#eef3fb"></div>
<div class="a" style="left:707px;top:447px;width:93px;height:20px;background:#c6e1a0"></div>
<div class="a t n" style="left:431px;top:450px">24.02.2022</div>
<div class="a t n" style="left:510px;top:450px">04.08.2022</div>
<div class="a t r n" style="left:584px;width:117px;top:450px">12.720,00 <span style='letter-spacing:-0.9px'>EUR</span></div>
<div class="a t r n" style="left:706px;width:90px;top:450px;color:#3c6b22">161</div>
<div class="a t r n" style="left:800px;width:115px;top:450px">12720,0000</div>
<div class="a t r n" style="left:919px;width:108px;top:450px">0</div>
<div class="a t r n" style="left:1031px;width:110px;top:450px">0</div>
<div class="a t lk n" style="left:1149px;top:450px">R20220893</div>
<div class="a t" style="left:1242px;top:450px;letter-spacing:-0.25px">Rechnung</div>
<div class="a t lk" style="left:1314px;top:450px;letter-spacing:-0.13px">Greithanner KG (11064 / 71988)</div>
<div class="a" style="left:404px;top:467px;width:1207px;height:1px;background:#c3d3ec"></div>
<div class="a" style="left:427px;top:468px;width:1184px;height:20px;background:#ffffff"></div>
<div class="a" style="left:707px;top:468px;width:93px;height:20px;background:#c6e1a0"></div>
<div class="a t n" style="left:431px;top:471px">11.02.2022</div>
<div class="a t n" style="left:510px;top:471px">04.08.2022</div>
<div class="a t r n" style="left:584px;width:117px;top:471px">17.552,45 <span style='letter-spacing:-0.9px'>EUR</span></div>
<div class="a t r n" style="left:706px;width:90px;top:471px;color:#3c6b22">174</div>
<div class="a t r n" style="left:800px;width:115px;top:471px">17552,4500</div>
<div class="a t r n" style="left:919px;width:108px;top:471px">0</div>
<div class="a t r n" style="left:1031px;width:110px;top:471px">0</div>
<div class="a t lk n" style="left:1149px;top:471px">R20220895</div>
<div class="a t" style="left:1242px;top:471px;letter-spacing:-0.25px">Rechnung</div>
<div class="a t lk" style="left:1314px;top:471px;letter-spacing:-0.13px">Riethmüller OHG (11607 [KI11114])</div>
<div class="a" style="left:404px;top:488px;width:1207px;height:1px;background:#c3d3ec"></div>
<div class="a" style="left:427px;top:489px;width:1184px;height:20px;background:#eef3fb"></div>
<div class="a" style="left:707px;top:489px;width:93px;height:20px;background:#fddf98"></div>
<div class="a t n" style="left:431px;top:492px">29.11.2021</div>
<div class="a t n" style="left:510px;top:492px">05.08.2022</div>
<div class="a t r n" style="left:584px;width:117px;top:492px">560,00 <span style='letter-spacing:-0.9px'>EUR</span></div>
<div class="a t r n" style="left:706px;width:90px;top:492px;color:#c46418">249</div>
<div class="a t r n" style="left:800px;width:115px;top:492px">0</div>
<div class="a t r n" style="left:919px;width:108px;top:492px">560,0000</div>
<div class="a t r n" style="left:1031px;width:110px;top:492px">0</div>
<div class="a t lk n" style="left:1149px;top:492px">R20220898</div>
<div class="a t" style="left:1242px;top:492px;letter-spacing:-0.25px">Rechnung</div>
<div class="a t lk" style="left:1314px;top:492px;letter-spacing:-0.13px">Schmuhl KG (10681 / 71745)</div>
<div class="a" style="left:404px;top:509px;width:1207px;height:1px;background:#c3d3ec"></div>
<div class="a" style="left:427px;top:510px;width:1184px;height:20px;background:#ffffff"></div>
<div class="a" style="left:707px;top:510px;width:93px;height:20px;background:#c6e1a0"></div>
<div class="a t n" style="left:431px;top:513px">14.04.2022</div>
<div class="a t n" style="left:510px;top:513px">05.08.2022</div>
<div class="a t r n" style="left:584px;width:117px;top:513px">767,50 <span style='letter-spacing:-0.9px'>EUR</span></div>
<div class="a t r n" style="left:706px;width:90px;top:513px;color:#3c6b22">113</div>
<div class="a t r n" style="left:800px;width:115px;top:513px">767,5000</div>
<div class="a t r n" style="left:919px;width:108px;top:513px">0</div>
<div class="a t r n" style="left:1031px;width:110px;top:513px">0</div>
<div class="a t lk n" style="left:1149px;top:513px">R20220897</div>
<div class="a t" style="left:1242px;top:513px;letter-spacing:-0.25px">Rechnung</div>
<div class="a t lk" style="left:1314px;top:513px;letter-spacing:-0.13px">Plauk OHG (11560 [KI10262] / 71501)</div>
<div class="a" style="left:404px;top:530px;width:1207px;height:1px;background:#c3d3ec"></div>
<div class="a" style="left:427px;top:531px;width:1184px;height:20px;background:#eef3fb"></div>
<div class="a" style="left:707px;top:531px;width:93px;height:20px;background:#c6e1a0"></div>
<div class="a t n" style="left:431px;top:534px">30.06.2022</div>
<div class="a t n" style="left:510px;top:534px">08.08.2022</div>
<div class="a t r n" style="left:584px;width:117px;top:534px">592,70 <span style='letter-spacing:-0.9px'>EUR</span></div>
<div class="a t r n" style="left:706px;width:90px;top:534px;color:#3c6b22">39</div>
<div class="a t r n" style="left:800px;width:115px;top:534px">592,7000</div>
<div class="a t r n" style="left:919px;width:108px;top:534px">0</div>
<div class="a t r n" style="left:1031px;width:110px;top:534px">0</div>
<div class="a t lk n" style="left:1149px;top:534px">R20220899</div>
<div class="a t" style="left:1242px;top:534px;letter-spacing:-0.25px">Rechnung</div>
<div class="a t lk" style="left:1314px;top:534px;letter-spacing:-0.13px">Eplinius AG (11174)</div>
<div class="a" style="left:404px;top:551px;width:1207px;height:1px;background:#c3d3ec"></div>
<div class="a" style="left:427px;top:552px;width:1184px;height:20px;background:#ffffff"></div>
<div class="a" style="left:707px;top:552px;width:93px;height:20px;background:#fddf98"></div>
<div class="a t n" style="left:431px;top:555px">29.09.2021</div>
<div class="a t n" style="left:510px;top:555px">08.08.2022</div>
<div class="a t r n" style="left:584px;width:117px;top:555px">582,00 <span style='letter-spacing:-0.9px'>EUR</span></div>
<div class="a t r n" style="left:706px;width:90px;top:555px;color:#c46418">313</div>
<div class="a t r n" style="left:800px;width:115px;top:555px">0</div>
<div class="a t r n" style="left:919px;width:108px;top:555px">582,0000</div>
<div class="a t r n" style="left:1031px;width:110px;top:555px">0</div>
<div class="a t lk n" style="left:1149px;top:555px">R20220901</div>
<div class="a t" style="left:1242px;top:555px;letter-spacing:-0.25px">Rechnung</div>
<div class="a t lk" style="left:1314px;top:555px;letter-spacing:-0.13px">Schimmer GmbH (11605 [KI11065] / 71874)</div>
<div class="a" style="left:404px;top:572px;width:1207px;height:1px;background:#c3d3ec"></div>
<div class="a" style="left:427px;top:573px;width:1184px;height:20px;background:#eef3fb"></div>
<div class="a" style="left:707px;top:573px;width:93px;height:20px;background:#fddf98"></div>
<div class="a t n" style="left:431px;top:576px">29.09.2021</div>
<div class="a t n" style="left:510px;top:576px">08.08.2022</div>
<div class="a t r n" style="left:584px;width:117px;top:576px">9.850,00 <span style='letter-spacing:-0.9px'>EUR</span></div>
<div class="a t r n" style="left:706px;width:90px;top:576px;color:#c46418">313</div>
<div class="a t r n" style="left:800px;width:115px;top:576px">0</div>
<div class="a t r n" style="left:919px;width:108px;top:576px">9850,0000</div>
<div class="a t r n" style="left:1031px;width:110px;top:576px">0</div>
<div class="a t lk n" style="left:1149px;top:576px">R20220902</div>
<div class="a t" style="left:1242px;top:576px;letter-spacing:-0.25px">Rechnung</div>
<div class="a t lk" style="left:1314px;top:576px;letter-spacing:-0.13px">Schimmer GmbH (11605 [KI11065] / 71874)</div>
<div class="a" style="left:404px;top:593px;width:1207px;height:1px;background:#c3d3ec"></div>
<div class="a" style="left:427px;top:594px;width:1184px;height:20px;background:#ffffff"></div>
<div class="a" style="left:707px;top:594px;width:93px;height:20px;background:#fddf98"></div>
<div class="a t n" style="left:431px;top:597px">25.08.2021</div>
<div class="a t n" style="left:510px;top:597px">09.08.2022</div>
<div class="a t r n" style="left:584px;width:117px;top:597px">1.763,90 <span style='letter-spacing:-0.9px'>EUR</span></div>
<div class="a t r n" style="left:706px;width:90px;top:597px;color:#c46418">349</div>
<div class="a t r n" style="left:800px;width:115px;top:597px">0</div>
<div class="a t r n" style="left:919px;width:108px;top:597px">1763,9000</div>
<div class="a t r n" style="left:1031px;width:110px;top:597px">0</div>
<div class="a t lk n" style="left:1149px;top:597px">R20220903</div>
<div class="a t" style="left:1242px;top:597px;letter-spacing:-0.25px">Rechnung</div>
<div class="a t lk" style="left:1314px;top:597px;letter-spacing:-0.13px">Koha GmbH &amp; Co. KG (11312)</div>
<div class="a" style="left:404px;top:614px;width:1207px;height:1px;background:#c3d3ec"></div>
<div class="a" style="left:427px;top:615px;width:1184px;height:20px;background:#eef3fb"></div>
<div class="a" style="left:707px;top:615px;width:93px;height:20px;background:#fddf98"></div>
<div class="a t n" style="left:431px;top:618px">14.12.2021</div>
<div class="a t n" style="left:510px;top:618px">09.08.2022</div>
<div class="a t r n" style="left:584px;width:117px;top:618px">12.126,00 <span style='letter-spacing:-0.9px'>EUR</span></div>
<div class="a t r n" style="left:706px;width:90px;top:618px;color:#c46418">238</div>
<div class="a t r n" style="left:800px;width:115px;top:618px">0</div>
<div class="a t r n" style="left:919px;width:108px;top:618px">12126,0000</div>
<div class="a t r n" style="left:1031px;width:110px;top:618px">0</div>
<div class="a t lk n" style="left:1149px;top:618px">R20220904</div>
<div class="a t" style="left:1242px;top:618px;letter-spacing:-0.25px">Rechnung</div>
<div class="a t lk" style="left:1314px;top:618px;letter-spacing:-0.13px">Liebe GmbH &amp; Co. KG (11543 [KI10782])</div>
<div class="a" style="left:404px;top:635px;width:1207px;height:1px;background:#c3d3ec"></div>
<div class="a" style="left:427px;top:636px;width:1184px;height:20px;background:#ffffff"></div>
<div class="a" style="left:707px;top:636px;width:93px;height:20px;background:#c6e1a0"></div>
<div class="a t n" style="left:431px;top:639px">09.03.2022</div>
<div class="a t n" style="left:510px;top:639px">09.08.2022</div>
<div class="a t r n" style="left:584px;width:117px;top:639px">12.126,00 <span style='letter-spacing:-0.9px'>EUR</span></div>
<div class="a t r n" style="left:706px;width:90px;top:639px;color:#3c6b22">153</div>
<div class="a t r n" style="left:800px;width:115px;top:639px">12126,0000</div>
<div class="a t r n" style="left:919px;width:108px;top:639px">0</div>
<div class="a t r n" style="left:1031px;width:110px;top:639px">0</div>
<div class="a t lk n" style="left:1149px;top:639px">R20220905</div>
<div class="a t" style="left:1242px;top:639px;letter-spacing:-0.25px">Rechnung</div>
<div class="a t lk" style="left:1314px;top:639px;letter-spacing:-0.13px">Liebe GmbH &amp; Co. KG (11543 [KI10782])</div>
<div class="a" style="left:404px;top:656px;width:1207px;height:1px;background:#c3d3ec"></div>
<div class="a" style="left:427px;top:657px;width:1184px;height:20px;background:#eef3fb"></div>
<div class="a" style="left:707px;top:657px;width:93px;height:20px;background:#c6e1a0"></div>
<div class="a t n" style="left:431px;top:660px">10.03.2022</div>
<div class="a t n" style="left:510px;top:660px">10.08.2022</div>
<div class="a t r n" style="left:584px;width:117px;top:660px">2.356,00 <span style='letter-spacing:-0.9px'>EUR</span></div>
<div class="a t r n" style="left:706px;width:90px;top:660px;color:#3c6b22">153</div>
<div class="a t r n" style="left:800px;width:115px;top:660px">2356,0000</div>
<div class="a t r n" style="left:919px;width:108px;top:660px">0</div>
<div class="a t r n" style="left:1031px;width:110px;top:660px">0</div>
<div class="a t lk n" style="left:1149px;top:660px">R20220906</div>
<div class="a t" style="left:1242px;top:660px;letter-spacing:-0.25px">Rechnung</div>
<div class="a t lk" style="left:1314px;top:660px;letter-spacing:-0.13px">Schrader KG (11476 [KI10581])</div>
<div class="a" style="left:404px;top:677px;width:1207px;height:1px;background:#c3d3ec"></div>
<div class="a" style="left:427px;top:678px;width:1184px;height:20px;background:#ffffff"></div>
<div class="a" style="left:707px;top:678px;width:93px;height:20px;background:#c6e1a0"></div>
<div class="a t n" style="left:431px;top:681px">03.03.2022</div>
<div class="a t n" style="left:510px;top:681px">10.08.2022</div>
<div class="a t r n" style="left:584px;width:117px;top:681px">295,50 <span style='letter-spacing:-0.9px'>EUR</span></div>
<div class="a t r n" style="left:706px;width:90px;top:681px;color:#3c6b22">160</div>
<div class="a t r n" style="left:800px;width:115px;top:681px">295,5000</div>
<div class="a t r n" style="left:919px;width:108px;top:681px">0</div>
<div class="a t r n" style="left:1031px;width:110px;top:681px">0</div>
<div class="a t lk n" style="left:1149px;top:681px">R20220908</div>
<div class="a t" style="left:1242px;top:681px;letter-spacing:-0.25px">Rechnung</div>
<div class="a t lk" style="left:1314px;top:681px;letter-spacing:-0.13px">Harter UG (10640 / 71470)</div>
<div class="a" style="left:404px;top:698px;width:1207px;height:1px;background:#c3d3ec"></div>
<div class="a" style="left:427px;top:699px;width:1184px;height:20px;background:#eef3fb"></div>
<div class="a" style="left:707px;top:699px;width:93px;height:20px;background:#fddf98"></div>
<div class="a t n" style="left:431px;top:702px">08.11.2021</div>
<div class="a t n" style="left:510px;top:702px">10.08.2022</div>
<div class="a t r n" style="left:584px;width:117px;top:702px">3.799,80 <span style='letter-spacing:-0.9px'>EUR</span></div>
<div class="a t r n" style="left:706px;width:90px;top:702px;color:#c46418">275</div>
<div class="a t r n" style="left:800px;width:115px;top:702px">0</div>
<div class="a t r n" style="left:919px;width:108px;top:702px">3799,8000</div>
<div class="a t r n" style="left:1031px;width:110px;top:702px">0</div>
<div class="a t lk n" style="left:1149px;top:702px">R20220909</div>
<div class="a t" style="left:1242px;top:702px;letter-spacing:-0.25px">Rechnung</div>
<div class="a t lk" style="left:1314px;top:702px;letter-spacing:-0.13px">Orth GmbH &amp; Co. KG (11140)</div>
<div class="a" style="left:404px;top:719px;width:1207px;height:1px;background:#c3d3ec"></div>
<div class="a" style="left:427px;top:720px;width:1184px;height:20px;background:#ffffff"></div>
<div class="a" style="left:707px;top:720px;width:93px;height:20px;background:#f8c7c8"></div>
<div class="a t n" style="left:431px;top:723px">09.10.2019</div>
<div class="a t n" style="left:510px;top:723px">10.08.2022</div>
<div class="a t r n" style="left:584px;width:117px;top:723px">65.923,20 <span style='letter-spacing:-0.9px'>EUR</span></div>
<div class="a t r n" style="left:706px;width:90px;top:723px;color:#d2122e">1036</div>
<div class="a t r n" style="left:800px;width:115px;top:723px">0</div>
<div class="a t r n" style="left:919px;width:108px;top:723px">0</div>
<div class="a t r n" style="left:1031px;width:110px;top:723px">65923,2000</div>
<div class="a t lk n" style="left:1149px;top:723px">R20220907</div>
<div class="a t" style="left:1242px;top:723px;letter-spacing:-0.25px">Rechnung</div>
<div class="a t lk" style="left:1314px;top:723px;letter-spacing:-0.13px">Wieser GmbH &amp; Co. KG (11213 [KI10142] / 71891)</div>
<div class="a" style="left:404px;top:740px;width:1207px;height:1px;background:#c3d3ec"></div>
<div class="a" style="left:427px;top:741px;width:1184px;height:20px;background:#eef3fb"></div>
<div class="a" style="left:707px;top:741px;width:93px;height:20px;background:#fddf98"></div>
<div class="a t n" style="left:431px;top:744px">27.09.2021</div>
<div class="a t n" style="left:510px;top:744px">11.08.2022</div>
<div class="a t r n" style="left:584px;width:117px;top:744px">17.696,20 <span style='letter-spacing:-0.9px'>EUR</span></div>
<div class="a t r n" style="left:706px;width:90px;top:744px;color:#c46418">318</div>
<div class="a t r n" style="left:800px;width:115px;top:744px">0</div>
<div class="a t r n" style="left:919px;width:108px;top:744px">17696,2000</div>
<div class="a t r n" style="left:1031px;width:110px;top:744px">0</div>
<div class="a t lk n" style="left:1149px;top:744px">R20220911</div>
<div class="a t" style="left:1242px;top:744px;letter-spacing:-0.25px">Rechnung</div>
<div class="a t lk" style="left:1314px;top:744px;letter-spacing:-0.13px">Rath UG (11606 [KI10639])</div>
<div class="a" style="left:404px;top:761px;width:1207px;height:1px;background:#c3d3ec"></div>
<div class="a" style="left:427px;top:762px;width:1184px;height:20px;background:#ffffff"></div>
<div class="a" style="left:707px;top:762px;width:93px;height:20px;background:#c6e1a0"></div>
<div class="a t n" style="left:431px;top:765px">28.07.2022</div>
<div class="a t n" style="left:510px;top:765px">11.08.2022</div>
<div class="a t r n" style="left:584px;width:117px;top:765px">370,00 <span style='letter-spacing:-0.9px'>EUR</span></div>
<div class="a t r n" style="left:706px;width:90px;top:765px;color:#3c6b22">14</div>
<div class="a t r n" style="left:800px;width:115px;top:765px">370,0000</div>
<div class="a t r n" style="left:919px;width:108px;top:765px">0</div>
<div class="a t r n" style="left:1031px;width:110px;top:765px">0</div>
<div class="a t lk n" style="left:1149px;top:765px">R20220912</div>
<div class="a t" style="left:1242px;top:765px;letter-spacing:-0.25px">Rechnung</div>
<div class="a t lk" style="left:1314px;top:765px;letter-spacing:-0.13px">Bornscheuer AG (10053 / 71644)</div>
<div class="a" style="left:404px;top:782px;width:1207px;height:1px;background:#c3d3ec"></div>
<div class="a" style="left:427px;top:783px;width:1184px;height:20px;background:#eef3fb"></div>
<div class="a" style="left:707px;top:783px;width:93px;height:20px;background:#fddf98"></div>
<div class="a t n" style="left:431px;top:786px">03.01.2022</div>
<div class="a t n" style="left:510px;top:786px">11.08.2022</div>
<div class="a t r n" style="left:584px;width:117px;top:786px">2.264,50 <span style='letter-spacing:-0.9px'>EUR</span></div>
<div class="a t r n" style="left:706px;width:90px;top:786px;color:#c46418">220</div>
<div class="a t r n" style="left:800px;width:115px;top:786px">0</div>
<div class="a t r n" style="left:919px;width:108px;top:786px">2264,5000</div>
<div class="a t r n" style="left:1031px;width:110px;top:786px">0</div>
<div class="a t lk n" style="left:1149px;top:786px">R20220914</div>
<div class="a t" style="left:1242px;top:786px;letter-spacing:-0.25px">Rechnung</div>
<div class="a t lk" style="left:1314px;top:786px;letter-spacing:-0.13px">Wanner KG (10749)</div>
<div class="a" style="left:404px;top:803px;width:1207px;height:1px;background:#c3d3ec"></div>
<div class="a" style="left:427px;top:804px;width:1184px;height:20px;background:#ffffff"></div>
<div class="a" style="left:707px;top:804px;width:93px;height:20px;background:#f8c7c8"></div>
<div class="a t n" style="left:431px;top:807px">10.03.2021</div>
<div class="a t n" style="left:510px;top:807px">12.08.2022</div>
<div class="a t r n" style="left:584px;width:117px;top:807px">57.542,46 <span style='letter-spacing:-0.9px'>EUR</span></div>
<div class="a t r n" style="left:706px;width:90px;top:807px;color:#d2122e">520</div>
<div class="a t r n" style="left:800px;width:115px;top:807px">0</div>
<div class="a t r n" style="left:919px;width:108px;top:807px">0</div>
<div class="a t r n" style="left:1031px;width:110px;top:807px">57542,4600</div>
<div class="a t lk n" style="left:1149px;top:807px">R20220915</div>
<div class="a t" style="left:1242px;top:807px;letter-spacing:-0.25px">Rechnung</div>
<div class="a t lk" style="left:1314px;top:807px;letter-spacing:-0.13px">Sonnabend GmbH (11434 [KI10551] / 71774)</div>
<div class="a" style="left:404px;top:824px;width:1207px;height:1px;background:#c3d3ec"></div>
<div class="a" style="left:427px;top:825px;width:1184px;height:20px;background:#eef3fb"></div>
<div class="a" style="left:707px;top:825px;width:93px;height:20px;background:#fddf98"></div>
<div class="a t n" style="left:431px;top:828px">12.01.2022</div>
<div class="a t n" style="left:510px;top:828px">12.08.2022</div>
<div class="a t r n" style="left:584px;width:117px;top:828px">1.153,50 <span style='letter-spacing:-0.9px'>EUR</span></div>
<div class="a t r n" style="left:706px;width:90px;top:828px;color:#c46418">212</div>
<div class="a t r n" style="left:800px;width:115px;top:828px">0</div>
<div class="a t r n" style="left:919px;width:108px;top:828px">1153,5000</div>
<div class="a t r n" style="left:1031px;width:110px;top:828px">0</div>
<div class="a t lk n" style="left:1149px;top:828px">R20220918</div>
<div class="a t" style="left:1242px;top:828px;letter-spacing:-0.25px">Rechnung</div>
<div class="a t lk" style="left:1314px;top:828px;letter-spacing:-0.13px">Kloss GmbH (10683 / 71776)</div>
<div class="a" style="left:404px;top:845px;width:1207px;height:1px;background:#c3d3ec"></div>
<div class="a" style="left:427px;top:846px;width:1184px;height:20px;background:#ffffff"></div>
<div class="a" style="left:707px;top:846px;width:93px;height:20px;background:#c6e1a0"></div>
<div class="a t n" style="left:431px;top:849px">17.05.2022</div>
<div class="a t n" style="left:510px;top:849px">15.08.2022</div>
<div class="a t r n" style="left:584px;width:117px;top:849px">4.018,00 <span style='letter-spacing:-0.9px'>EUR</span></div>
<div class="a t r n" style="left:706px;width:90px;top:849px;color:#3c6b22">90</div>
<div class="a t r n" style="left:800px;width:115px;top:849px">4018,0000</div>
<div class="a t r n" style="left:919px;width:108px;top:849px">0</div>
<div class="a t r n" style="left:1031px;width:110px;top:849px">0</div>
<div class="a t lk n" style="left:1149px;top:849px">R20220921</div>
<div class="a t" style="left:1242px;top:849px;letter-spacing:-0.25px">Rechnung</div>
<div class="a t lk" style="left:1314px;top:849px;letter-spacing:-0.13px">Döring Gruppe (11480 / 71771)</div>
<div class="a" style="left:404px;top:866px;width:1207px;height:1px;background:#c3d3ec"></div>
<div class="a" style="left:427px;top:867px;width:1184px;height:20px;background:#eef3fb"></div>
<div class="a" style="left:707px;top:867px;width:93px;height:20px;background:#c6e1a0"></div>
<div class="a t n" style="left:431px;top:870px">06.04.2022</div>
<div class="a t n" style="left:510px;top:870px">15.08.2022</div>
<div class="a t r n" style="left:584px;width:117px;top:870px">42.792,00 <span style='letter-spacing:-0.9px'>EUR</span></div>
<div class="a t r n" style="left:706px;width:90px;top:870px;color:#3c6b22">131</div>
<div class="a t r n" style="left:800px;width:115px;top:870px">42792,0000</div>
<div class="a t r n" style="left:919px;width:108px;top:870px">0</div>
<div class="a t r n" style="left:1031px;width:110px;top:870px">0</div>
<div class="a t lk n" style="left:1149px;top:870px">R20220922</div>
<div class="a t" style="left:1242px;top:870px;letter-spacing:-0.25px">Rechnung</div>
<div class="a t lk" style="left:1314px;top:870px;letter-spacing:-0.13px">Gruning Gruppe (10387 / 71729)</div>
<div class="a" style="left:404px;top:887px;width:1207px;height:1px;background:#c3d3ec"></div>
<div class="a" style="left:427px;top:888px;width:1184px;height:20px;background:#ffffff"></div>
<div class="a" style="left:707px;top:888px;width:93px;height:20px;background:#fddf98"></div>
<div class="a t n" style="left:431px;top:891px">28.09.2021</div>
<div class="a t n" style="left:510px;top:891px">15.08.2022</div>
<div class="a t r n" style="left:584px;width:117px;top:891px">51.620,00 <span style='letter-spacing:-0.9px'>EUR</span></div>
<div class="a t r n" style="left:706px;width:90px;top:891px;color:#c46418">321</div>
<div class="a t r n" style="left:800px;width:115px;top:891px">0</div>
<div class="a t r n" style="left:919px;width:108px;top:891px">51620,0000</div>
<div class="a t r n" style="left:1031px;width:110px;top:891px">0</div>
<div class="a t lk n" style="left:1149px;top:891px">R20220923</div>
<div class="a t" style="left:1242px;top:891px;letter-spacing:-0.25px">Rechnung</div>
<div class="a t lk" style="left:1314px;top:891px;letter-spacing:-0.13px">Neubauer AG (11571 [KI11034] / 71915)</div>
<div class="a" style="left:404px;top:908px;width:1207px;height:1px;background:#c3d3ec"></div>
<div class="a" style="left:427px;top:909px;width:1184px;height:20px;background:#eef3fb"></div>
<div class="a" style="left:707px;top:909px;width:93px;height:20px;background:#c6e1a0"></div>
<div class="a t n" style="left:431px;top:912px">04.03.2022</div>
<div class="a t n" style="left:510px;top:912px">15.08.2022</div>
<div class="a t r n" style="left:584px;width:117px;top:912px">580,60 <span style='letter-spacing:-0.9px'>EUR</span></div>
<div class="a t r n" style="left:706px;width:90px;top:912px;color:#3c6b22">164</div>
<div class="a t r n" style="left:800px;width:115px;top:912px">580,6000</div>
<div class="a t r n" style="left:919px;width:108px;top:912px">0</div>
<div class="a t r n" style="left:1031px;width:110px;top:912px">0</div>
<div class="a t lk n" style="left:1149px;top:912px">R20220920</div>
<div class="a t" style="left:1242px;top:912px;letter-spacing:-0.25px">Rechnung</div>
<div class="a t lk" style="left:1314px;top:912px;letter-spacing:-0.13px">Kampschulte KG (11367)</div>
<div class="a" style="left:404px;top:929px;width:1207px;height:1px;background:#c3d3ec"></div>
<div class="a" style="left:426px;top:242px;width:1px;height:688px;background:#b9cce9"></div>
<div class="a" style="left:505px;top:242px;width:1px;height:688px;background:#b9cce9"></div>
<div class="a" style="left:584px;top:242px;width:1px;height:688px;background:#b9cce9"></div>
<div class="a" style="left:706px;top:242px;width:1px;height:688px;background:#b9cce9"></div>
<div class="a" style="left:800px;top:242px;width:1px;height:688px;background:#b9cce9"></div>
<div class="a" style="left:919px;top:242px;width:1px;height:688px;background:#b9cce9"></div>
<div class="a" style="left:1031px;top:242px;width:1px;height:688px;background:#b9cce9"></div>
<div class="a" style="left:1145px;top:242px;width:1px;height:688px;background:#b9cce9"></div>
<div class="a" style="left:1237px;top:242px;width:1px;height:688px;background:#b9cce9"></div>
<div class="a" style="left:1310px;top:242px;width:1px;height:688px;background:#b9cce9"></div>
<div class="a" style="left:1611px;top:242px;width:1px;height:688px;background:#b9cce9"></div>
<div class="a" style="left:404px;top:931px;width:1266px;height:1px;background:#c3d3ec"></div>
<div class="a" style="left:586px;top:938px;width:120px;height:24px;background:#e3eaf5"></div>
<div class="a t r b" style="left:586px;width:117px;top:943px;color:#000;letter-spacing:0.75px">Σ=8.627.700,92 E...</div>
<div class="a" style="left:802px;top:938px;width:117px;height:24px;background:#e3eaf5"></div>
<div class="a t r b" style="left:802px;width:114px;top:943px;color:#000;letter-spacing:0.75px">Σ=2.736.620,8100</div>
<div class="a" style="left:921px;top:938px;width:110px;height:24px;background:#e3eaf5"></div>
<div class="a t r b" style="left:921px;width:107px;top:943px;color:#000;letter-spacing:0.75px">Σ=2.785.373,9000</div>
<div class="a" style="left:1033px;top:938px;width:112px;height:24px;background:#e3eaf5"></div>
<div class="a t r b" style="left:1033px;width:109px;top:943px;color:#000;letter-spacing:0.75px">Σ=3.105.706,2100</div>
<div class="a" style="left:1653px;top:300px;width:16px;height:630px;background:#e4ebf7"></div>
<div class="a" style="left:1654px;top:301px;width:15px;height:16px;background:#fff;border:1px solid #a9c0e2"></div>
<div class="a" style="left:1654px;top:887px;width:15px;height:27px;background:#fff;border:1px solid #a9c0e2"></div>
<div class="a" style="left:1654px;top:914px;width:15px;height:16px;background:#fff;border:1px solid #a9c0e2"></div>
<svg style="left:1654px;top:301px" width="15" height="629"><path d="M3.5 10.5 L7.5 6 L11.5 10.5 Z M3.5 619 L7.5 623.5 L11.5 619 Z" fill="#555"/></svg>

<!-- STATUS BAR -->
<div class="a" style="left:58px;top:971px;width:1613px;height:25px;background:#eef3fb"></div>
<div class="a" style="left:58px;top:213px;width:3px;height:758px;background:#eef3fb"></div>
<div class="a" style="left:61px;top:972px;width:1610px;height:1px;background:#b9cce9"></div>
<div class="a" style="left:57px;top:994px;width:1614px;height:1px;background:#b9cce9"></div>
<svg style="left:66px;top:975px" width="20" height="16"><path d="M2.5 8 L7 12.5 L15.5 3" fill="none" stroke="#4f9a68" stroke-width="2.6"/></svg>
<div class="a t" style="left:89px;top:976px;color:#000;letter-spacing:-0.07px">Die Auswertung wurde erfolgreich gespeichert.</div>

</body></html>
